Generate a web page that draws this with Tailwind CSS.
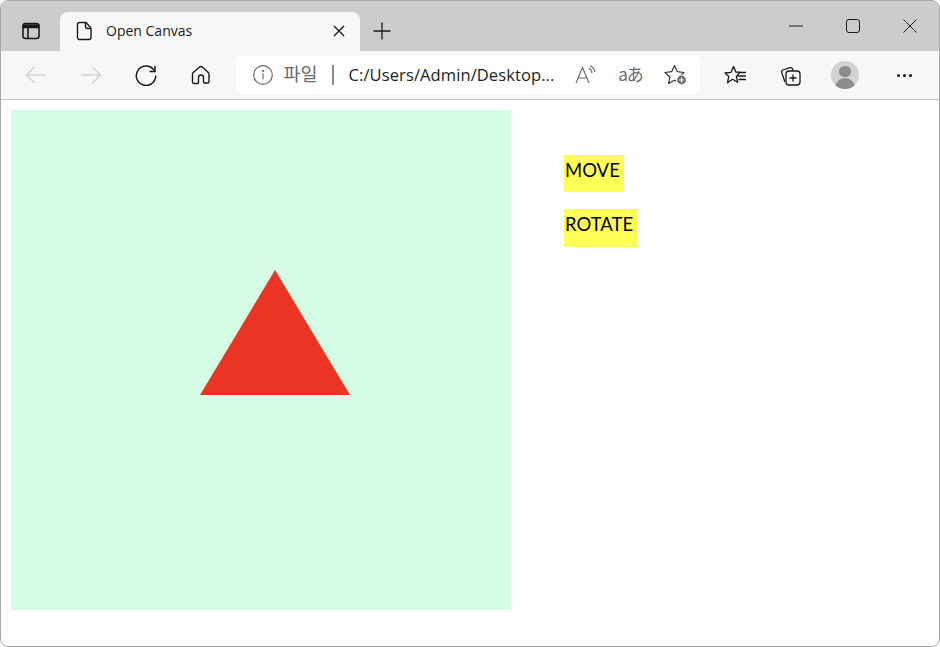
<!doctype html>
<html lang="en">
  <head>
    <meta charset="UTF-8" />
    <title>Open Canvas</title>
    <script src="https://cdn.jsdelivr.net/npm/@tailwindcss/browser@4"></script>
  </head>
  <body class="bg-white font-['Open_Sans','Noto_Sans_CJK_KR',sans-serif]">
    <div class="w-[940px] h-[647px] border border-[#a8a8a8] rounded-lg overflow-hidden flex flex-col bg-white">
      <!-- tab strip -->
      <div class="h-[50px] bg-[#cccccc] flex items-end shrink-0">
        <div class="w-[59px] h-[50px] flex items-center justify-center pt-[10px]">
          <svg width="20" height="20" viewBox="0 0 20 20" fill="none" stroke="#1a1a1a" stroke-width="1.6">
            <rect x="2" y="2.500" width="16" height="15" rx="2.500" />
            <path d="M2.500 4h15v2.500h-15z" fill="#1a1a1a" />
            <path d="M7 6.500v10.500" />
          </svg>
        </div>
        <div class="w-[300px] h-[39px] bg-[#f7f7f7] rounded-t-lg flex items-center pl-[16px] pr-[15px] pb-[1px]">
          <svg width="18" height="20" viewBox="0 0 18 20" fill="none" stroke="#1a1a1a" stroke-width="1.4" stroke-linejoin="round">
            <path d="M3.500 1.500h6.500l5 5.500v9.500a2 2 0 0 1-2 2H3.500a2 2 0 0 1-2-2V3.500a2 2 0 0 1 2-2z" />
            <path d="M9.500 1.500v4a2 2 0 0 0 2 2h3.500" />
          </svg>
          <span class="ml-[12px] text-[14px] text-[#222222] pb-[2px]">Open Canvas</span>
          <svg class="ml-auto" width="12" height="12" viewBox="0 0 12 12" stroke="#1a1a1a" stroke-width="1.4">
            <path d="M1 1l10 10M11 1L1 11" />
          </svg>
        </div>
        <div class="w-[43px] h-[50px] flex items-center justify-center pt-[10px]">
          <svg width="18" height="18" viewBox="0 0 18 18" stroke="#1a1a1a" stroke-width="1.3">
            <path d="M9 0.500v17M0.500 9h17" />
          </svg>
        </div>
        <div class="ml-auto h-[50px] flex items-start pt-[15px] pr-[1px]">
          <div class="w-[57px] h-[20px] flex items-center justify-center">
            <svg width="14" height="2" viewBox="0 0 14 2" stroke="#1a1a1a"><path d="M0 1h14" /></svg>
          </div>
          <div class="w-[57px] h-[20px] flex items-center justify-center">
            <svg width="14" height="14" viewBox="0 0 14 14" fill="none" stroke="#1a1a1a"><rect x="0.500" y="0.500" width="13" height="13" rx="2.500" /></svg>
          </div>
          <div class="w-[57px] h-[20px] flex items-center justify-center">
            <svg width="14" height="14" viewBox="0 0 14 14" stroke="#1a1a1a"><path d="M0.500 0.500l13 13M13.500 0.500l-13 13" /></svg>
          </div>
        </div>
      </div>

      <!-- toolbar -->
      <div class="h-[49px] bg-[#f7f7f7] border-b border-[#c4c4c4] flex items-center pl-[7.500px] shrink-0">
        <div class="w-[55px] flex justify-center">
          <svg width="22" height="18" viewBox="0 0 22 18" fill="none" stroke="#d2d2d2" stroke-width="1.300"><path d="M21 9H1.500M9.500 1L1.500 9l8 8" /></svg>
        </div>
        <div class="w-[55px] flex justify-center">
          <svg width="22" height="18" viewBox="0 0 22 18" fill="none" stroke="#d2d2d2" stroke-width="1.300"><path d="M1 9h19.500M12.500 1l8 8-8 8" /></svg>
        </div>
        <div class="w-[55px] flex justify-center">
          <svg width="22" height="22" viewBox="0 0 22 22" fill="none" stroke="#1a1a1a" stroke-width="1.500"><path d="M19.500 7A9.700 9.700 0 1 0 20.700 11.500" /><path d="M20 2v5.500h-5.500" /></svg>
        </div>
        <div class="w-[55px] flex justify-center">
          <svg width="20" height="20" viewBox="0 0 20 20" fill="none" stroke="#1a1a1a" stroke-width="1.400" stroke-linejoin="round"><path d="M8.300 2.300a2.500 2.500 0 0 1 3.400 0l5.800 5.400a1.500 1.500 0 0 1 .5 1.100v7.700a1.500 1.500 0 0 1-1.500 1.500h-3a1 1 0 0 1-1-1v-4.500a2.500 2.500 0 0 0-5 0V17.500a1 1 0 0 1-1 1h-3A1.500 1.500 0 0 1 1.500 17V8.800a1.500 1.500 0 0 1 .5-1.100z" /></svg>
        </div>
        <!-- address bar -->
        <div class="ml-[7px] w-[464px] h-[38px] bg-white rounded-md flex items-center pl-[17px]">
          <svg width="20" height="20" viewBox="0 0 20 20" fill="none" stroke="#6b6b6b" stroke-width="1.200">
            <circle cx="10" cy="10" r="9.300" />
            <path d="M10 8.500v6" />
            <circle cx="10" cy="6" r="0.500" fill="#6b6b6b" />
          </svg>
          <span class="ml-[11px] text-[18.500px] leading-none text-[#6b6b6b] font-['Noto_Sans_CJK_KR',sans-serif] pb-[3px]">파일</span>
          <span class="ml-[14px] w-[2px] h-[20px] bg-[#8a8a8a]"></span>
          <span class="ml-[15px] w-[206px] text-[16.500px] tracking-[0.100px] text-[#222222] whitespace-nowrap">C:/Users/Admin/Desktop...</span>
          <div class="ml-[19px] w-[24px] flex justify-center">
            <svg width="22" height="20" viewBox="0 0 22 20" fill="none" stroke="#6b6b6b" stroke-width="1.200"><path d="M1 18L7.500 2.500 14 18M3.200 13h8.600" /><path d="M13.500 3a6 6 0 0 1 3.500 5M15 0.800a9 9 0 0 1 5 6" /></svg>
          </div>
          <div class="ml-[21px] w-[24px] flex justify-center">
            <span class="text-[17px] leading-none text-[#6b6b6b] font-['Noto_Sans_CJK_KR',sans-serif] tracking-[-1px] pb-[3px] whitespace-nowrap">aあ</span>
          </div>
          <div class="ml-[21px] w-[24px] flex justify-center">
            <svg width="24" height="22" viewBox="0 0 24 22" fill="none" stroke="#333333" stroke-width="1.200" stroke-linejoin="round">
              <path d="M10.500 1.500l2.900 6.200 6.600.8-4.900 4.500 1.300 6.500-5.900-3.300-5.900 3.300 1.300-6.500L1 8.500l6.600-.8z" />
              <circle cx="17.500" cy="16" r="5" fill="#6b6b6b" stroke="#ffffff" />
              <path d="M17.500 13.500v5M15 16h5" stroke="#ffffff" />
            </svg>
          </div>
        </div>
        <div class="ml-[8px] w-[56px] flex justify-center">
          <svg width="24" height="20" viewBox="0 0 24 20" fill="none" stroke="#1a1a1a" stroke-width="1.300" stroke-linejoin="round"><path d="M9.500 1.500l2.400 5.500 4 .4-3.500 4 1.300 5.900-5.200-3-5 3.400 1.300-6.300L1 8l6-.7z" /><path d="M15 7.500h7M13.500 11h8.500M14.500 14.500h7.500" /></svg>
        </div>
        <div class="w-[52px] flex justify-center">
          <svg width="22" height="22" viewBox="0 0 22 22" fill="none" stroke="#1a1a1a" stroke-width="1.300" stroke-linejoin="round"><path d="M6 18L2.700 8.500a2 2 0 0 1 1.300-2.500l7-2.300a2 2 0 0 1 2.500 1.300l.5 1.500" /><rect x="7" y="7" width="14" height="14" rx="3" /><path d="M14 10.500v7M10.500 14h7" /></svg>
        </div>
        <div class="w-[59px] flex justify-center">
          <div class="w-[28px] h-[28px] rounded-full bg-[#d3d3d3] overflow-hidden flex flex-col items-center">
            <div class="mt-[5px] w-[12px] h-[12px] rounded-full bg-[#8c8c8c]"></div>
            <div class="mt-[1px] w-[20px] h-[12px] rounded-t-full bg-[#8c8c8c]"></div>
          </div>
        </div>
        <div class="ml-[2px] w-[55px] flex justify-center gap-[3px]">
          <span class="w-[3px] h-[3px] rounded-full bg-[#1a1a1a]"></span>
          <span class="w-[3px] h-[3px] rounded-full bg-[#1a1a1a]"></span>
          <span class="w-[3px] h-[3px] rounded-full bg-[#1a1a1a]"></span>
        </div>
      </div>

      <!-- page content -->
      <div class="flex-1 flex items-start pt-[10px] pl-[10px]">
        <svg class="shrink-0" width="500" height="500" viewBox="0 0 500 500">
          <rect width="500" height="500" fill="#d5fde6" />
          <polygon points="264,160 189,285 339,285" fill="#ec3423" />
        </svg>
        <div class="ml-[53px] mt-[45px] flex flex-col items-start gap-[17px] font-['Lato',sans-serif] text-[18.500px] text-black">
          <button class="h-[37px] w-[60px] bg-[#ffff55] pl-[1px] pb-[6px] text-left">MOVE</button>
          <button class="h-[38px] w-[73px] bg-[#ffff55] pl-[1px] pb-[6px] text-left">ROTATE</button>
        </div>
      </div>
    </div>
  </body>
</html>
